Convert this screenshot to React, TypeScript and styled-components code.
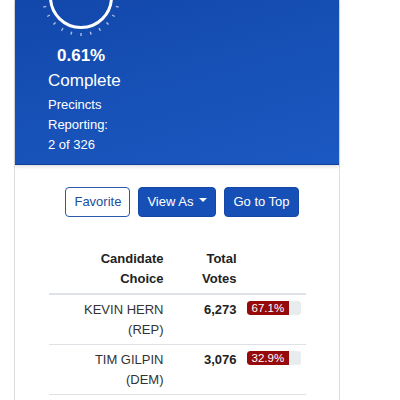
import React from "react";
import styled, { createGlobalStyle } from "styled-components";

const GlobalStyle = createGlobalStyle`
  html, body { margin: 0; padding: 0; background: #ffffff; }
  body { font-family: "Liberation Sans", Arial, Helvetica, sans-serif; color: #333; }
  * { box-sizing: border-box; }
`;

const Page = styled.div`
  padding-left: 14px;
  width: 354px;
`;

const Card = styled.div`
  width: 326px;
  min-height: 400px;
  border-left: 1px solid #dcdcdc;
  border-right: 1px solid #dcdcdc;
  background: #fff;
`;

const Header = styled.div`
  height: 165px;
  background: linear-gradient(165deg, #1247aa 0%, #1751b7 50%, #1b58c1 100%);
  border-bottom: 1px solid #0f3f98;
  box-shadow: 0 2px 3px rgba(0, 0, 0, 0.12);
  padding-left: 33px;
  color: #fff;
  overflow: hidden;
`;

const Stats = styled.div`
  width: 70px;
  display: flex;
  flex-direction: column;
  align-items: flex-start;
`;

const GaugeSvg = styled.svg`
  display: block;
  margin-left: -12px;
  flex: none;
`;

const Percent = styled.div`
  font-size: 17px;
  font-weight: 700;
  line-height: 22px;
  margin-left: 9px;
`;

const Complete = styled.div`
  font-size: 17px;
  line-height: 24px;
  margin-top: 2px;
`;

const Precincts = styled.div`
  font-size: 13px;
  line-height: 20px;
  margin-top: 1.5px;
  white-space: nowrap;
`;

const ButtonRow = styled.div`
  display: flex;
  justify-content: center;
  gap: 8px;
  margin-top: 22px;
  padding-left: 10px;
`;

const Button = styled.button<{ $outline?: boolean }>`
  font-family: "Liberation Sans", Arial, sans-serif;
  font-size: 13px;
  line-height: 19.5px;
  padding: 4px 8px;
  border-radius: 4px;
  border: 1px solid ${(p) => (p.$outline ? "#2a58aa" : "#1348a9")};
  background: ${(p) => (p.$outline ? "#ffffff" : "#1650b6")};
  color: ${(p) => (p.$outline ? "#1d4e9e" : "#ffffff")};
  display: inline-flex;
  align-items: center;
  cursor: pointer;
`;

const Caret = styled.span`
  display: inline-block;
  margin-left: 6px;
  margin-top: -3px;
  width: 0;
  height: 0;
  border-top: 4px solid #fff;
  border-left: 4px solid transparent;
  border-right: 4px solid transparent;
`;

const Table = styled.div`
  width: 257px;
  margin: 27px auto 0;
  display: grid;
  grid-template-columns: 120px 73px 64px;
`;

const HeadCell = styled.div`
  font-size: 13px;
  font-weight: 700;
  line-height: 20px;
  color: #222;
  text-align: right;
  padding: 5px 5px 4px;
  border-bottom: 2px solid #dee2e6;
`;

const Cell = styled.div<{ $bold?: boolean }>`
  font-size: 13px;
  line-height: 20px;
  color: ${(p) => (p.$bold ? "#222" : "#333")};
  font-weight: ${(p) => (p.$bold ? 700 : 400)};
  text-align: right;
  padding: 5px 5px 4px;
  border-bottom: 1px solid #dee2e6;
`;

const BarCell = styled.div`
  padding: 6px 5px 4px;
  border-bottom: 1px solid #dee2e6;
`;

const Bar = styled.div`
  height: 14px;
  border-radius: 3px;
  background: #e9ecef;
  display: flex;
  overflow: hidden;
`;

const Fill = styled.div`
  background: #950b0b;
  color: #fff;
  font-size: 11.5px;
  line-height: 14px;
  padding: 0 5px;
  border-radius: 3px 0 0 3px;
  white-space: nowrap;
`;

const Gauge: React.FC = () => {
  const cx = 45;
  const cy = -3;
  const ticks = [];
  for (let a = 0; a < 360; a += 15) {
    const r = (a * Math.PI) / 180;
    ticks.push(
      <line
        key={a}
        x1={cx + Math.cos(r) * 36}
        y1={cy + Math.sin(r) * 36}
        x2={cx + Math.cos(r) * 39}
        y2={cy + Math.sin(r) * 39}
        stroke="rgba(220,232,255,0.75)"
        strokeWidth={1.4}
      />
    );
  }
  return (
    <GaugeSvg width={90} height={45} viewBox="0 0 90 45">
      {ticks}
      <circle cx={cx} cy={cy} r={30.5} fill="none" stroke="#ffffff" strokeWidth={3} />
    </GaugeSvg>
  );
};

const rows = [
  { name: "KEVIN HERN", party: "(REP)", votes: "6,273", pct: "67.1%" },
  { name: "TIM GILPIN", party: "(DEM)", votes: "3,076", pct: "32.9%" },
];

export default function App() {
  return (
    <>
      <GlobalStyle />
      <Page>
        <Card>
          <Header>
            <Stats>
              <Gauge />
              <Percent>0.61%</Percent>
              <Complete>Complete</Complete>
              <Precincts>
                Precincts
                <br />
                Reporting:
                <br />2 of 326
              </Precincts>
            </Stats>
          </Header>
          <ButtonRow>
            <Button $outline>Favorite</Button>
            <Button>
              View As<Caret />
            </Button>
            <Button>Go to Top</Button>
          </ButtonRow>
          <Table>
            <HeadCell>
              Candidate
              <br />
              Choice
            </HeadCell>
            <HeadCell>
              Total
              <br />
              Votes
            </HeadCell>
            <HeadCell />
            {rows.map((r) => (
              <React.Fragment key={r.name}>
                <Cell>
                  {r.name}
                  <br />
                  {r.party}
                </Cell>
                <Cell $bold>{r.votes}</Cell>
                <BarCell>
                  <Bar>
                    <Fill>{r.pct}</Fill>
                  </Bar>
                </BarCell>
              </React.Fragment>
            ))}
          </Table>
        </Card>
      </Page>
    </>
  );
}
